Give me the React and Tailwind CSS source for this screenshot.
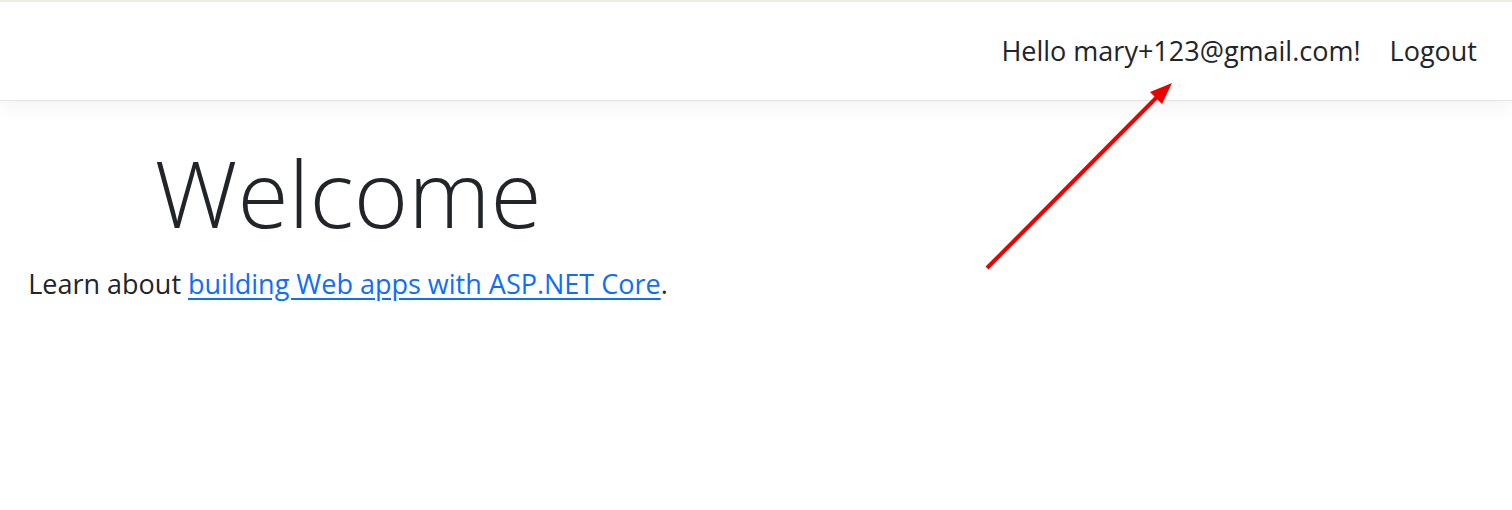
import React from 'react';

export default function App() {
  return (
    <div className="relative w-[1512px] h-[510px] bg-white overflow-hidden text-[#212529]" style={{ fontFamily: '"Open Sans", "Noto Sans", sans-serif' }}>
      <div className="h-[2px] bg-[#f1f0e0]" />
      <header className="h-[99px] border-b border-[#e4e4e4] shadow-[0_6px_18px_rgba(0,0,0,0.05)] flex items-center justify-end pr-[35px]">
        <nav className="flex items-center gap-[29px] text-[27px]">
          <span>Hello mary+123@gmail.com!</span>
          <a className="text-[#212529]">Logout</a>
        </nav>
      </header>
      <main className="w-[696px] text-center">
        <h1 className="text-[93px] font-light leading-[1.2] mt-[36px] mb-[15px]">Welcome</h1>
        <p className="text-[27px] leading-[1.5]">
          Learn about{' '}
          <a className="text-[#0d6efd] underline underline-offset-[4px]">building Web apps with ASP.NET Core</a>.
        </p>
      </main>
      <svg className="absolute left-0 top-0 pointer-events-none" width="1512" height="510">
        <line x1="987" y1="268" x2="1158" y2="96" stroke="#ee0000" strokeWidth="4" />
        <polygon points="1172,83 1150,92 1162,104" fill="#ee0000" />
      </svg>
    </div>
  );
}
